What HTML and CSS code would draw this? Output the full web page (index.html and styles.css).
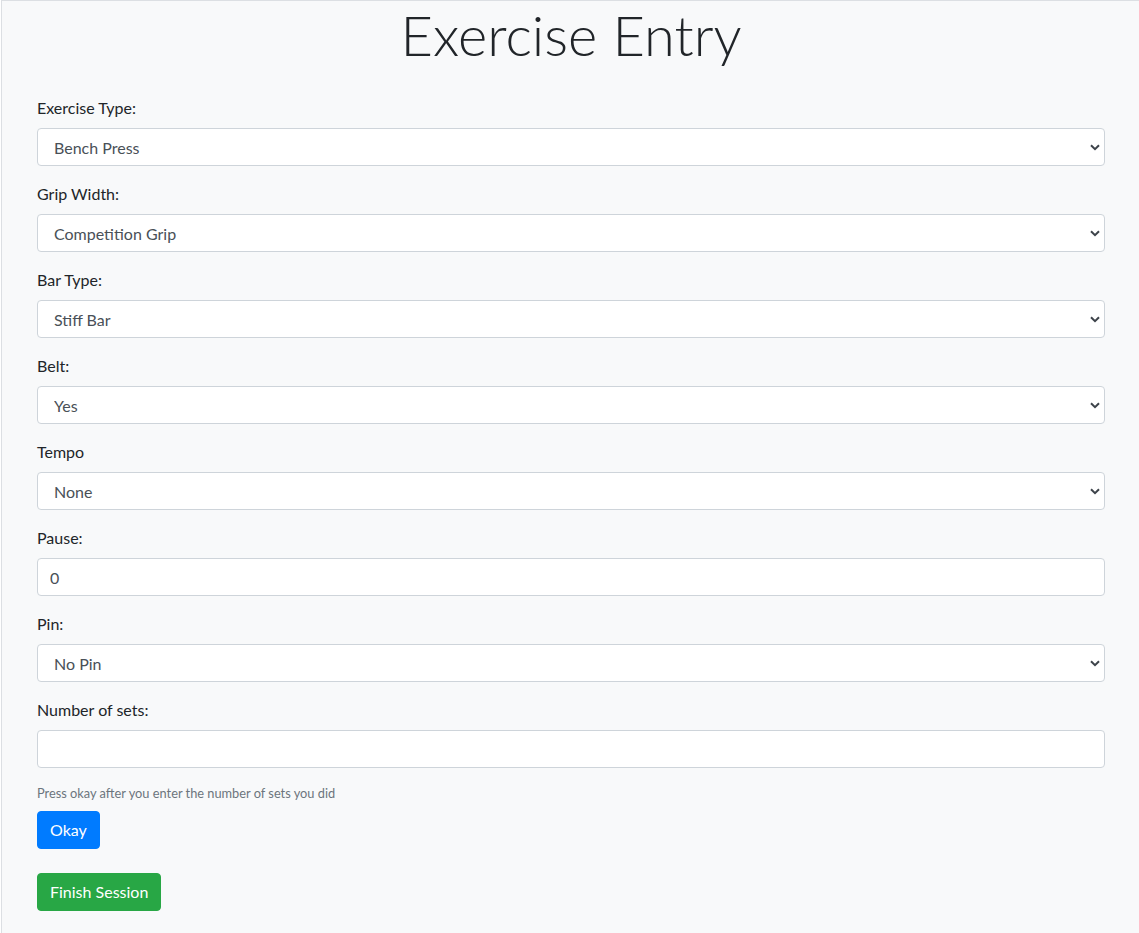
FILE: index.html
```html
<!DOCTYPE html>
<html lang="en">
<head>
<meta charset="utf-8">
<title>Exercise Entry</title>
<link rel="stylesheet" href="styles.css">
</head>
<body>
<div class="page">
  <h1 class="title">Exercise Entry</h1>
  <form class="entry-form">
    <div class="form-group">
      <label class="field-label">Exercise Type:</label>
      <div class="select-wrap">
        <select class="field-control select-control"><option>Bench Press</option></select>
        <svg class="chevron" width="10" height="7" viewBox="0 0 10 7"><polyline points="1,1.2 5,5.2 9,1.2" fill="none" stroke="#3d434a" stroke-width="2"/></svg>
      </div>
    </div>
    <div class="form-group">
      <label class="field-label">Grip Width:</label>
      <div class="select-wrap">
        <select class="field-control select-control"><option>Competition Grip</option></select>
        <svg class="chevron" width="10" height="7" viewBox="0 0 10 7"><polyline points="1,1.2 5,5.2 9,1.2" fill="none" stroke="#3d434a" stroke-width="2"/></svg>
      </div>
    </div>
    <div class="form-group">
      <label class="field-label">Bar Type:</label>
      <div class="select-wrap">
        <select class="field-control select-control"><option>Stiff Bar</option></select>
        <svg class="chevron" width="10" height="7" viewBox="0 0 10 7"><polyline points="1,1.2 5,5.2 9,1.2" fill="none" stroke="#3d434a" stroke-width="2"/></svg>
      </div>
    </div>
    <div class="form-group">
      <label class="field-label">Belt:</label>
      <div class="select-wrap">
        <select class="field-control select-control"><option>Yes</option></select>
        <svg class="chevron" width="10" height="7" viewBox="0 0 10 7"><polyline points="1,1.2 5,5.2 9,1.2" fill="none" stroke="#3d434a" stroke-width="2"/></svg>
      </div>
    </div>
    <div class="form-group">
      <label class="field-label">Tempo</label>
      <div class="select-wrap">
        <select class="field-control select-control"><option>None</option></select>
        <svg class="chevron" width="10" height="7" viewBox="0 0 10 7"><polyline points="1,1.2 5,5.2 9,1.2" fill="none" stroke="#3d434a" stroke-width="2"/></svg>
      </div>
    </div>
    <div class="form-group">
      <label class="field-label">Pause:</label>
      <input class="field-control" type="text" value="0">
    </div>
    <div class="form-group">
      <label class="field-label">Pin:</label>
      <div class="select-wrap">
        <select class="field-control select-control"><option>No Pin</option></select>
        <svg class="chevron" width="10" height="7" viewBox="0 0 10 7"><polyline points="1,1.2 5,5.2 9,1.2" fill="none" stroke="#3d434a" stroke-width="2"/></svg>
      </div>
    </div>
    <div class="form-group">
      <label class="field-label">Number of sets:</label>
      <input class="field-control" type="text" value="">
    </div>
    <small class="help-text">Press okay after you enter the number of sets you did</small>
    <button type="button" class="btn btn-primary">Okay</button>
    <button type="button" class="btn btn-success">Finish Session</button>
  </form>
</div>
</body>
</html>
```

FILE: styles.css
```css
html, body {
  margin: 0;
  padding: 0;
  background: #ffffff;
}

body {
  font-family: Lato, "Open Sans", "Liberation Sans", sans-serif;
  font-size: 16px;
  line-height: 24px;
  color: #212529;
}

.page {
  margin-left: 1px;
  min-height: 100vh;
  box-sizing: border-box;
  border-top: 1px solid #dcdfe3;
  border-left: 1px solid #dcdfe3;
  background: #f8f9fa;
  padding: 0 34px 0 35px;
}

.title {
  margin: 0 0 28px;
  font-size: 56px;
  line-height: 67px;
  font-weight: 300;
  text-align: center;
  color: #212529;
}

.entry-form {
  display: flex;
  flex-direction: column;
  align-items: stretch;
}

.form-group {
  margin-bottom: 16px;
}

.field-label {
  display: block;
  margin-bottom: 8px;
  line-height: 24px;
}

.select-wrap {
  position: relative;
}

.field-control {
  display: block;
  width: 100%;
  height: 38px;
  box-sizing: border-box;
  padding: 6px 12px;
  font-family: inherit;
  font-size: 16px;
  line-height: 24px;
  color: #495057;
  background: #ffffff;
  border: 1px solid #ced4da;
  border-radius: 4px;
  outline: none;
  margin: 0;
}

.select-control {
  -webkit-appearance: none;
  appearance: none;
  padding: 7px 30px 5px 16px;
}

.chevron {
  position: absolute;
  right: 5px;
  top: 16px;
  pointer-events: none;
}

.help-text {
  display: block;
  font-size: 12.8px;
  line-height: 19.2px;
  color: #6c757d;
  margin-bottom: 8px;
}

.btn {
  align-self: flex-start;
  font-family: inherit;
  font-size: 16px;
  line-height: 24px;
  padding: 6px 12px;
  border: 1px solid transparent;
  border-radius: 4px;
  color: #ffffff;
  cursor: pointer;
}

.btn-primary {
  background: #007bff;
  border-color: #007bff;
  margin-bottom: 24px;
}

.btn-success {
  background: #28a745;
  border-color: #28a745;
}
```
